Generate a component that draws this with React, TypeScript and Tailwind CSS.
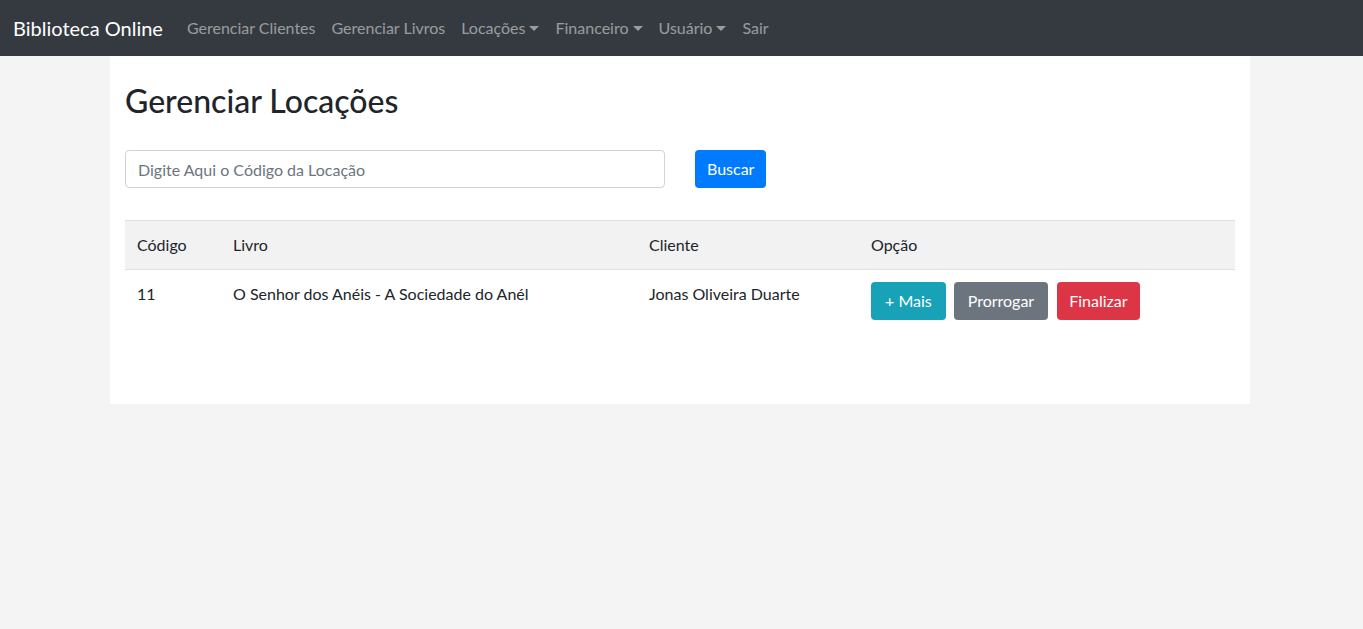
import { useState } from 'react';

const navLinks = [
  { label: 'Gerenciar Clientes', drop: false },
  { label: 'Gerenciar Livros', drop: false },
  { label: 'Locações', drop: true },
  { label: 'Financeiro', drop: true },
  { label: 'Usuário', drop: true },
  { label: 'Sair', drop: false },
];

const rows = [
  { codigo: '11', livro: 'O Senhor dos Anéis - A Sociedade do Anél', cliente: 'Jonas Oliveira Duarte' },
];

function Caret() {
  return <span className="ml-[4px] inline-block h-0 w-0 border-x-[5px] border-t-[5px] border-x-transparent border-t-current align-[3px]" />;
}

export default function App() {
  const [codigo, setCodigo] = useState('');

  return (
    <div className="min-h-screen bg-[#f4f4f4] text-[#212529] font-['Lato',sans-serif] text-base">
      <nav className="flex h-14 items-center bg-[#343a40] pl-[13px] pr-4">
        <a className="mr-4 text-xl leading-[30px] text-white">Biblioteca Online</a>
        <ul className="flex">
          {navLinks.map((l) => (
            <li key={l.label}>
              <a className="block px-2 py-2 leading-6 text-white/50">
                {l.label}
                {l.drop && <Caret />}
              </a>
            </li>
          ))}
        </ul>
      </nav>

      <main className="ml-[110px] w-[1140px] bg-white px-[15px] pt-[26px] pb-[72px]">
        <h2 className="mb-[30px] text-[32px] font-medium leading-[1.2]">Gerenciar Locações</h2>

        <div className="flex gap-[30px]">
          <input
            value={codigo}
            onChange={(e) => setCodigo(e.target.value)}
            placeholder="Digite Aqui o Código da Locação"
            className="h-[38px] w-[540px] rounded border border-[#ced4da] px-3 text-base placeholder:text-[#6c757d] outline-none"
          />
          <button className="h-[38px] rounded bg-[#007bff] px-3 text-white">Buscar</button>
        </div>

        <table className="mt-8 w-full border-collapse text-left">
          <thead>
            <tr className="bg-[#f2f2f2]">
              <th className="w-[96px] border-y border-[#dee2e6] p-3 font-normal">Código</th>
              <th className="w-[416px] border-y border-[#dee2e6] p-3 font-normal">Livro</th>
              <th className="w-[222px] border-y border-[#dee2e6] p-3 font-normal">Cliente</th>
              <th className="border-y border-[#dee2e6] p-3 font-normal">Opção</th>
            </tr>
          </thead>
          <tbody>
            {rows.map((r) => (
              <tr key={r.codigo}>
                <td className="p-3 align-top">{r.codigo}</td>
                <td className="p-3 align-top">{r.livro}</td>
                <td className="p-3 align-top">{r.cliente}</td>
                <td className="p-3 align-top">
                  <div className="flex gap-2">
                    <button className="h-[38px] rounded bg-[#17a2b8] px-[14px] text-white">+ Mais</button>
                    <button className="h-[38px] rounded bg-[#6c757d] px-[14px] text-white">Prorrogar</button>
                    <button className="ml-px h-[38px] rounded bg-[#dc3545] px-3 text-white">Finalizar</button>
                  </div>
                </td>
              </tr>
            ))}
          </tbody>
        </table>
      </main>
    </div>
  );
}
